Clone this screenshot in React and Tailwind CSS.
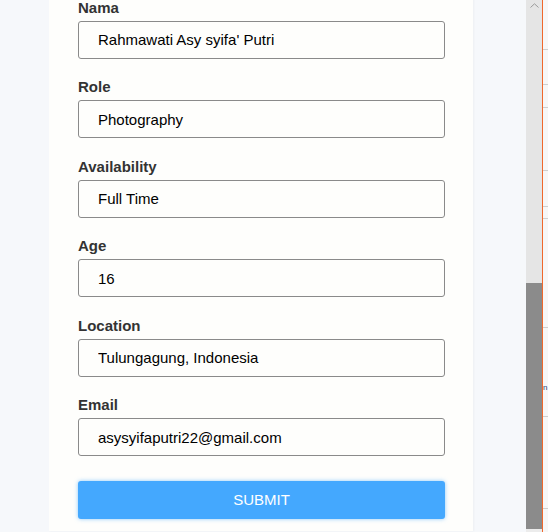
import React from "react";

const fields = [
  { label: "Nama", value: "Rahmawati Asy syifa' Putri" },
  { label: "Role", value: "Photography" },
  { label: "Availability", value: "Full Time" },
  { label: "Age", value: "16" },
  { label: "Location", value: "Tulungagung, Indonesia" },
  { label: "Email", value: "asysyifaputri22@gmail.com" },
];

// garis tipis di panel sebelah kanan (sisa halaman lain yang terpotong)
const stripLines = [49, 84, 107, 170, 206, 218, 327, 416, 508];

export default function App() {
  return (
    <div
      className="flex h-[532px] w-[548px] overflow-hidden bg-[#f6f8fb]"
      style={{ fontFamily: '"Liberation Sans", Arial, sans-serif' }}
    >
      {/* area utama */}
      <div className="w-[526px] shrink-0">
        <div className="ml-[49px] h-full w-[424px] bg-[#fefefc] pl-[29px] pr-[28px] shadow-[1px_0_2px_rgba(0,0,0,0.04)]">
          <form className="-mt-[1.5px] flex flex-col gap-[19.6px]">
            {fields.map((f) => (
              <div key={f.label} className="flex flex-col">
                <label className="mb-[5px] text-[15px] font-bold leading-[17px] text-[#333]">
                  {f.label}
                </label>
                <input
                  readOnly
                  defaultValue={f.value}
                  className="h-[38px] w-full rounded-[3px] border border-[#8a8a8a] bg-[#fefefc] pl-[19px] text-[15px] text-black outline-none"
                />
              </div>
            ))}
            <button
              type="button"
              className="mt-[5px] h-[38px] w-full rounded-[3px] bg-[#44a8fe] text-[15px] text-white shadow-[0_0_4px_rgba(68,168,254,0.6)]"
            >
              SUBMIT
            </button>
          </form>
        </div>
      </div>

      {/* scrollbar */}
      <div className="flex w-[16px] shrink-0 flex-col bg-[#e5e5e5]">
        <div className="flex h-[283px] justify-center pt-[3px]">
          <svg width="9" height="5" viewBox="0 0 9 5">
            <path d="M0.5 4.5 L4.5 0.8 L8.5 4.5" fill="none" stroke="#9a9a9a" strokeWidth="1" />
          </svg>
        </div>
        <div className="h-[246px] bg-[#8b8b8b]" />
        <div className="flex-1 bg-[#ececec]" />
      </div>
      <div className="w-px shrink-0 bg-[#f0682c]" />

      {/* panel kanan */}
      <div className="relative w-[5px] shrink-0 overflow-hidden bg-[#f7f7f7]">
        {stripLines.map((y) => (
          <div key={y} className="absolute left-0 h-px w-full bg-[#cfcfcf]" style={{ top: y }} />
        ))}
        <span className="absolute left-0 top-[384px] text-[8px] leading-none text-[#1f3b70]">n</span>
      </div>
    </div>
  );
}
